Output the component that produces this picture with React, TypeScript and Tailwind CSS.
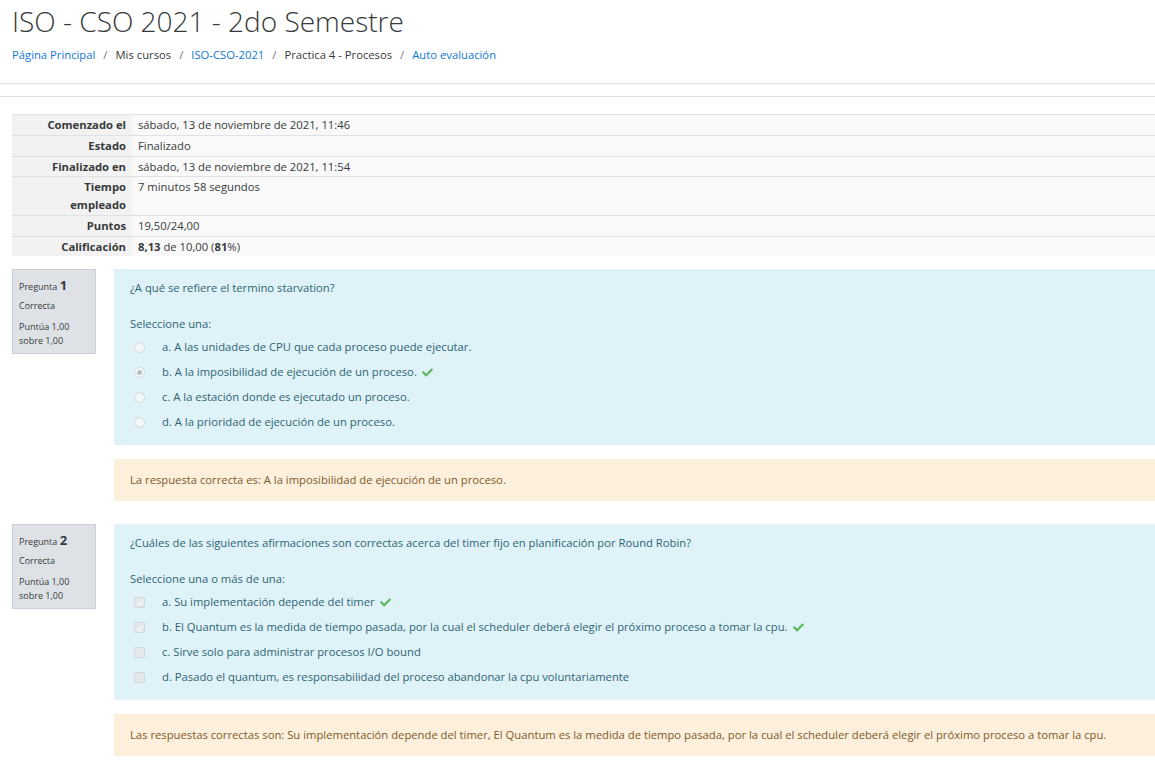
import { FC, ReactNode } from "react";

const Check: FC = () => (
  <svg viewBox="0 0 512 512" className="inline-block w-[11px] h-[11px] ml-[5px] -mt-[2px] fill-[#5cb85c] align-middle">
    <path d="M173.898 439.404l-166.4-166.4c-9.997-9.997-9.997-26.206 0-36.204l36.203-36.204c9.997-9.998 26.207-9.998 36.204 0L192 312.69 432.095 72.596c9.997-9.997 26.207-9.997 36.204 0l36.203 36.204c9.997 9.997 9.997 26.206 0 36.204l-294.4 294.401c-9.998 9.997-26.207 9.997-36.204-.001z" />
  </svg>
);

const Radio: FC<{ checked?: boolean }> = ({ checked }) => (
  <span className="inline-flex items-center justify-center w-[11px] h-[11px] rounded-full border border-[#d3d8dc] bg-[#f4f7f8]">
    {checked && <span className="w-[5px] h-[5px] rounded-full bg-[#b9c0c5]" />}
  </span>
);

const Box: FC<{ checked?: boolean }> = ({ checked }) => (
  <span className="inline-flex items-center justify-center w-[11px] h-[11px] rounded-[2px] border border-[#d3d8dc] bg-[#e4e8eb]">
    {checked && (
      <svg viewBox="0 0 10 10" className="w-[8px] h-[8px]">
        <path d="M1.5 5.2 L4 7.5 L8.5 2.5" fill="none" stroke="#f7f9fa" strokeWidth="1.6" />
      </svg>
    )}
  </span>
);

interface Opt {
  label: string;
  checked?: boolean;
  correct?: boolean;
}

const Question: FC<{
  num: number;
  text: string;
  prompt: string;
  kind: "radio" | "box";
  options: Opt[];
  answer: ReactNode;
}> = ({ num, text, prompt, kind, options, answer }) => (
  <div className="flex">
    <div className="w-[102px] shrink-0">
      <div className="w-[84px] h-[85px] bg-[#dee2e6] border border-[#cad0d7] px-[6px] pt-[8px] text-[9px] leading-[14px] text-[#373a3c]">
        <div>
          Pregunta <span className="text-[13px] font-bold">{num}</span>
        </div>
        <div className="mt-[5px]">Correcta</div>
        <div className="mt-[7px]">Puntúa 1,00</div>
        <div>sobre 1,00</div>
      </div>
    </div>
    <div className="flex-1">
      <div className="bg-[#def2f8] text-[#2f6473] px-[16px] pt-[10px] pb-[10px]">
        <div className="leading-[18px]">{text}</div>
        <div className="mt-[18px] leading-[18px]">{prompt}</div>
        <div className="mt-[2px]">
          {options.map((o) => (
            <div key={o.label} className="flex items-center h-[25px] pl-[4px]">
              <span className="w-[28px] flex">
                {kind === "radio" ? <Radio checked={o.checked} /> : <Box checked={o.checked} />}
              </span>
              <span>
                {o.label}
                {o.correct && <Check />}
              </span>
            </div>
          ))}
        </div>
      </div>
      <div className="mt-[14px] bg-[#fcefdc] text-[#7d5a29] px-[16px] py-[12px] leading-[18px]">{answer}</div>
    </div>
  </div>
);

const rows: [string[], ReactNode][] = [
  [["Comenzado el"], "sábado, 13 de noviembre de 2021, 11:46"],
  [["Estado"], "Finalizado"],
  [["Finalizado en"], "sábado, 13 de noviembre de 2021, 11:54"],
  [["Tiempo", "empleado"], "7 minutos 58 segundos"],
  [["Puntos"], "19,50/24,00"],
  [
    ["Calificación"],
    <>
      <b>8,13</b> de 10,00 (<b>81</b>%)
    </>,
  ],
];

const Sep: FC = () => <span className="px-[8px] text-[#6c757d]">/</span>;

export default function App() {
  return (
    <div className="w-[1155px] min-h-[768px] bg-white text-[#373a3c] text-[11.25px] font-['Open_Sans',sans-serif]">
      <div className="pl-[12px] pt-[3px]">
        <h1 className="text-[28px] font-light leading-[36px] text-[#373a3c]">ISO - CSO 2021 - 2do Semestre</h1>
        <nav className="mt-[7px] flex items-center leading-[18px]">
          <a className="text-[#1177d1]">Página Principal</a>
          <Sep />
          <span>Mis cursos</span>
          <Sep />
          <a className="text-[#1177d1]">ISO-CSO-2021</a>
          <Sep />
          <span>Practica 4 - Procesos</span>
          <Sep />
          <a className="text-[#1177d1]">Auto evaluación</a>
        </nav>
      </div>
      <div className="mt-[19px] border-t border-[#dee2e6] h-[13px]" />
      <div className="border-t border-[#dee2e6]" />
      <div className="pl-[12px] pt-[17px]">
        <table className="w-full border-collapse">
          <tbody>
            {rows.map(([label, value], i) => (
              <tr key={i} className="border-t border-[#dee2e6] align-top">
                <th className="w-[120px] bg-[#f2f2f2] text-right font-bold pr-[6px] py-px leading-[17.75px]">
                  {label.map((l) => (
                    <div key={l}>{l}</div>
                  ))}
                </th>
                <td className="bg-[#f9f9f9] pl-[6px] py-px leading-[17.75px]">{value}</td>
              </tr>
            ))}
          </tbody>
        </table>
        <div className="mt-[13px]">
          <Question
            num={1}
            text="¿A qué se refiere el termino starvation?"
            prompt="Seleccione una:"
            kind="radio"
            options={[
              { label: "a. A las unidades de CPU que cada proceso puede ejecutar." },
              { label: "b. A la imposibilidad de ejecución de un proceso.", checked: true, correct: true },
              { label: "c. A la estación donde es ejecutado un proceso." },
              { label: "d. A la prioridad de ejecución de un proceso." },
            ]}
            answer="La respuesta correcta es: A la imposibilidad de ejecución de un proceso."
          />
          <div className="h-[23px]" />
          <Question
            num={2}
            text="¿Cuáles de las siguientes afirmaciones son correctas acerca del timer fijo en planificación por Round Robin?"
            prompt="Seleccione una o más de una:"
            kind="box"
            options={[
              { label: "a. Su implementación depende del timer", checked: true, correct: true },
              {
                label:
                  "b. El Quantum es la medida de tiempo pasada, por la cual el scheduler deberá elegir el próximo proceso a tomar la cpu.",
                checked: true,
                correct: true,
              },
              { label: "c. Sirve solo para administrar procesos I/O bound" },
              { label: "d. Pasado el quantum, es responsabilidad del proceso abandonar la cpu voluntariamente" },
            ]}
            answer="Las respuestas correctas son: Su implementación depende del timer, El Quantum es la medida de tiempo pasada, por la cual el scheduler deberá elegir el próximo proceso a tomar la cpu."
          />
        </div>
      </div>
    </div>
  );
}
